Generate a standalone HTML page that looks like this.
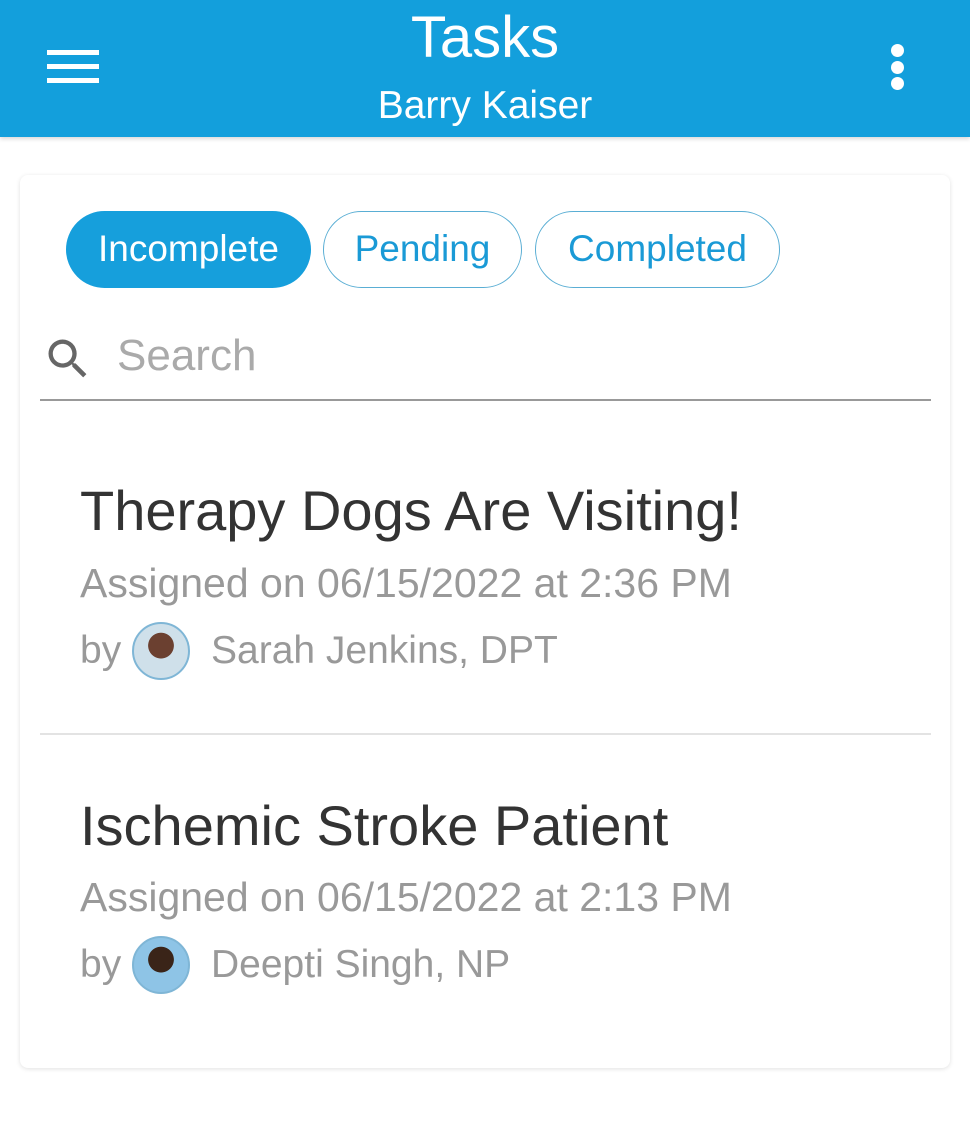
<!DOCTYPE html>
<html><head><style>
*{margin:0;padding:0;box-sizing:border-box}
body{width:970px;height:1125px;background:#fff;font-family:"Liberation Sans",sans-serif;position:relative;overflow:hidden}
.hdr{position:absolute;left:0;top:0;width:970px;height:137px;background:#139fdc;color:#fff;box-shadow:0 2px 4px rgba(0,0,0,.15)}
.t1{position:absolute;top:4px;width:100%;text-align:center;font-size:58px}
.t2{position:absolute;top:84px;width:100%;text-align:center;font-size:39px}
.card{position:absolute;left:20px;top:175px;width:930px;height:893px;background:#fff;border-radius:8px;box-shadow:0 1px 5px rgba(0,0,0,.12)}
.btn{position:absolute;top:211px;height:77px;border-radius:39px;border:1.5px solid #5aaed4;color:#1a9ad6;font-size:37px;line-height:74px;text-align:center;white-space:nowrap}
.a{position:absolute;white-space:nowrap}
.ttl{font-size:56px;color:#333}
.as{font-size:41px;color:#999}
.nm{font-size:39px;color:#999}
.av{position:absolute;width:58px;height:58px;border-radius:50%;border:2px solid #7fb6d6;background:radial-gradient(circle at 50% 40%,#6b4030 0 30%,#cfe0ea 31%)}
</style></head><body>
<div class="hdr">
<div style="position:absolute;left:47px;top:50px;width:52px;height:5px;background:#fff"></div>
<div style="position:absolute;left:47px;top:64px;width:52px;height:5px;background:#fff"></div>
<div style="position:absolute;left:47px;top:78px;width:52px;height:5px;background:#fff"></div>
<div style="position:absolute;left:891px;top:44px;width:13px;height:13px;border-radius:50%;background:#fff"></div>
<div style="position:absolute;left:891px;top:61px;width:13px;height:13px;border-radius:50%;background:#fff"></div>
<div style="position:absolute;left:891px;top:77px;width:13px;height:13px;border-radius:50%;background:#fff"></div>
<div class="t1">Tasks</div><div class="t2">Barry Kaiser</div>
</div>
<div class="card"></div>
<div class="btn" style="left:66px;width:245px;background:#169fdc;border-color:#169fdc;color:#fff">Incomplete</div>
<div class="btn" style="left:323px;width:199px">Pending</div>
<div class="btn" style="left:535px;width:245px">Completed</div>
<svg style="position:absolute;left:42px;top:333px" width="52" height="52" viewBox="0 0 24 24"><path fill="#666" d="M15.5 14h-.79l-.28-.27A6.47 6.47 0 0 0 16 9.5 6.5 6.5 0 1 0 9.5 16c1.61 0 3.09-.59 4.23-1.57l.27.28v.79l5 4.99L20.49 19l-4.99-5zm-6 0C7.01 14 5 11.99 5 9.5S7.01 5 9.5 5 14 7.01 14 9.5 11.99 14 9.5 14z"/></svg>
<div class="a" style="left:117px;top:331px;font-size:44px;color:#aaa">Search</div>
<div style="position:absolute;left:40px;top:399px;width:891px;height:2px;background:#999"></div>
<div class="a ttl" style="left:80px;top:478px">Therapy Dogs Are Visiting!</div>
<div class="a as" style="left:80px;top:560px">Assigned on 06/15/2022 at 2:36 PM</div>
<div class="a nm" style="left:80px;top:629px">by</div>
<div class="av" style="left:132px;top:622px"></div>
<div class="a nm" style="left:211px;top:629px">Sarah Jenkins, DPT</div>
<div style="position:absolute;left:40px;top:733px;width:891px;height:2px;background:#e3e3e3"></div>
<div class="a ttl" style="left:80px;top:793px">Ischemic Stroke Patient</div>
<div class="a as" style="left:80px;top:874px">Assigned on 06/15/2022 at 2:13 PM</div>
<div class="a nm" style="left:80px;top:943px">by</div>
<div class="av" style="left:132px;top:936px;background:radial-gradient(circle at 50% 40%,#3a2418 0 30%,#8ec4e6 31%)"></div>
<div class="a nm" style="left:211px;top:943px">Deepti Singh, NP</div>
</body></html>
